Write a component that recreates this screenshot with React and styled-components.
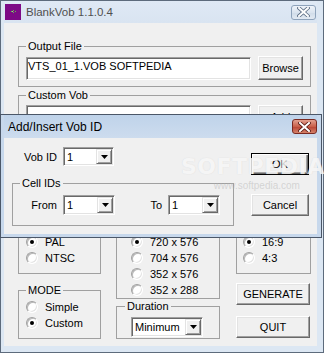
import React from "react";
import styled, { createGlobalStyle, css } from "styled-components";

const GlobalStyle = createGlobalStyle`
  html, body { margin: 0; padding: 0; background: #fff; }
  body { font-family: "Liberation Sans", Arial, sans-serif; font-size: 11px; color: #000; }
  * { box-sizing: border-box; }
`;

const Screen = styled.div`
  position: relative;
  width: 324px;
  height: 353px;
  overflow: hidden;
`;

const Window = styled.div`
  display: flex;
  flex-direction: column;
  width: 324px;
  height: 353px;
  border: 1px solid #5d6b7c;
  background: #dce7f3;
  padding: 0 6px 6px 3px;
`;

const TitleBar = styled.div`
  display: flex;
  align-items: center;
  height: ${(p) => p.$h}px;
  flex: none;
  padding-left: ${(p) => p.$pl}px;
  padding-right: ${(p) => p.$pr}px;
  background: ${(p) => p.$bg};
`;

const TitleText = styled.span`
  flex: 1;
  margin-left: ${(p) => p.$ml}px;
  font-family: "Liberation Sans", Arial, sans-serif;
  font-size: ${(p) => p.$size}px;
  color: ${(p) => p.$color};
  white-space: nowrap;
`;

const CloseButton = styled.div`
  width: 25px;
  height: 15px;
  border-radius: 3px;
  display: flex;
  align-items: center;
  justify-content: center;
  ${(p) =>
    p.$active
      ? css`
          border: 1px solid #7a2a22;
          background: linear-gradient(#e3a08f, #c9604a 50%, #b84232 51%, #d4826a);
        `
      : css`
          border: 1px solid #8ea3bb;
          background: linear-gradient(#eef3f9, #dae4ef 50%, #cfdbe8 51%, #e2eaf3);
        `}
`;

const Client = styled.div`
  flex: 1;
  background: #f0f0f0;
  display: flex;
  flex-direction: column;
  padding: 17px 6px 0 14px;
`;

const Group = styled.fieldset`
  margin: ${(p) => p.$mt || 0}px 0 0;
  padding: ${(p) => p.$pt || 0}px ${(p) => p.$pr || 0}px ${(p) => p.$pb || 0}px
    ${(p) => p.$pl || 0}px;
  border: 1px solid #a0a0a0;
  min-width: 0;
  width: ${(p) => (p.$w ? `${p.$w}px` : "auto")};
  display: flex;
  flex-direction: column;
`;

const Legend = styled.legend`
  padding: 0 2px;
  margin-left: ${(p) => p.$ml || 0}px;
  line-height: 12px;
  font-size: 11px;
`;

const Row = styled.div`
  display: flex;
  align-items: ${(p) => p.$align || "center"};
  gap: ${(p) => p.$gap || 0}px;
`;

const TextField = styled.div`
  width: ${(p) => p.$w}px;
  height: ${(p) => p.$h || 23}px;
  background: #fff;
  border: 1px solid;
  border-color: #a0a0a0 #fff #fff #a0a0a0;
  box-shadow: inset 1px 1px 0 #696969, inset -1px -1px 0 #e3e3e3;
  padding: 2px 1px 0 1px;
  line-height: 13px;
  white-space: nowrap;
`;

const Button = styled.button`
  width: ${(p) => p.$w}px;
  height: ${(p) => p.$h || 22}px;
  margin: ${(p) => p.$mt || 0}px 0 0 0;
  padding: 0;
  font-family: inherit;
  font-size: 11px;
  color: #000;
  background: #f0f0f0;
  display: flex;
  align-items: center;
  justify-content: center;
  border: 1px solid;
  border-color: #fff #696969 #696969 #fff;
  box-shadow: inset -1px -1px 0 #a0a0a0, inset 1px 1px 0 #e3e3e3;
  ${(p) =>
    p.$default &&
    css`
      border-color: #000;
      box-shadow: inset 1px 1px 0 #fff, inset -1px -1px 0 #696969, inset -2px -2px 0 #a0a0a0;
    `}
`;

const FieldLabel = styled.span`
  width: ${(p) => p.$w}px;
  margin-left: ${(p) => p.$ml || 0}px;
  margin-right: 6px;
  text-align: right;
  white-space: nowrap;
  flex: none;
`;

const Combo = styled.div`
  width: ${(p) => p.$w}px;
  height: ${(p) => p.$h || 20}px;
  flex: none;
  display: flex;
  background: #fff;
  border: 1px solid;
  border-color: #a0a0a0 #fff #fff #a0a0a0;
  box-shadow: inset 1px 1px 0 #696969, inset -1px -1px 0 #e3e3e3;
  padding: 1px;
`;

const ComboValue = styled.span`
  flex: 1;
  padding-left: 2px;
  line-height: 16px;
  font-size: 11px;
`;

const ComboArrow = styled.span`
  width: 16px;
  flex: none;
  display: flex;
  align-items: center;
  justify-content: center;
  background: #f0f0f0;
  border: 1px solid;
  border-color: #e3e3e3 #696969 #696969 #e3e3e3;
  box-shadow: inset 1px 1px 0 #fff, inset -1px -1px 0 #a0a0a0;
`;

const RadioList = styled.div`
  display: flex;
  flex-direction: column;
`;

const RadioRow = styled.div`
  display: flex;
  align-items: center;
  height: 16px;
  gap: 7px;
  white-space: nowrap;
`;

const RadioCircle = styled.span`
  width: 12px;
  height: 12px;
  flex: none;
  border-radius: 50%;
  background: #fff;
  border: 1px solid;
  border-color: #a0a0a0 #fff #fff #a0a0a0;
  box-shadow: inset 1px 1px 0 #b9b9b9, inset -1px -1px 0 #e3e3e3;
  display: flex;
  align-items: center;
  justify-content: center;
`;

const RadioDot = styled.span`
  width: 4px;
  height: 4px;
  border-radius: 50%;
  background: #000;
`;

const Columns = styled.div`
  display: flex;
  margin-top: 11px;
`;

const Column = styled.div`
  display: flex;
  flex-direction: column;
  width: ${(p) => p.$w}px;
  margin-left: ${(p) => p.$ml || 0}px;
  flex: none;
`;

const ListBox = styled(TextField)`
  margin-top: 5px;
`;

const Dialog = styled.div`
  position: absolute;
  left: 0;
  top: 114px;
  width: 322px;
  height: 124px;
  border: 1px solid #4b5768;
  background: #c7d8ec;
  display: flex;
  flex-direction: column;
  padding: 0 4px 3px 3px;
`;

const DialogBody = styled.div`
  flex: 1;
  background: #f0f0f0;
  display: flex;
  padding: 9px 0 0 8px;
`;

const DialogLeft = styled.div`
  display: flex;
  flex-direction: column;
  width: 222px;
`;

const DialogRight = styled.div`
  display: flex;
  flex-direction: column;
  margin-left: 17px;
  padding-top: 6px;
`;

const Watermark = styled.div`
  position: absolute;
  left: 181px;
  top: 154px;
  display: flex;
  flex-direction: column;
  align-items: center;
  pointer-events: none;
`;

const WatermarkBig = styled.span`
  font-family: "DejaVu Sans", sans-serif;
  font-weight: bold;
  font-size: 22px;
  letter-spacing: 0.5px;
  color: rgba(255, 255, 255, 0.75);
  text-shadow: 0 0 1px rgba(170, 170, 170, 0.35);
  line-height: 26px;
`;

const WatermarkSmall = styled.span`
  font-family: "Liberation Sans", Arial, sans-serif;
  font-size: 10px;
  color: rgba(175, 175, 175, 0.45);
  line-height: 12px;
  margin-left: 8px;
`;

const AppIcon = () => (
  <svg width="16" height="16" viewBox="0 0 16 16">
    <rect x="0" y="0" width="16" height="16" fill="#7d0a86" />
    <rect x="6" y="7" width="1" height="1" fill="#5ec24a" />
    <rect x="8" y="6" width="1" height="1" fill="#5ec24a" />
    <rect x="8" y="8" width="1" height="1" fill="#5ec24a" />
    <rect x="10" y="7" width="1" height="1" fill="#5ec24a" />
    <rect x="7" y="7" width="1" height="1" fill="#a0d890" />
  </svg>
);

const CloseGlyph = ({ active }) => (
  <svg width="13" height="10" viewBox="0 0 13 10">
    <path
      d="M2 1 L11 9 M11 1 L2 9"
      stroke={active ? "#5a1a12" : "#5d6f86"}
      strokeWidth="3.6"
      strokeLinecap="square"
      fill="none"
    />
    <path
      d="M2 1 L11 9 M11 1 L2 9"
      stroke="#fff"
      strokeWidth="2"
      strokeLinecap="square"
      fill="none"
    />
  </svg>
);

const Arrow = () => (
  <svg width="7" height="4" viewBox="0 0 7 4">
    <polygon points="0,0 7,0 3.5,4" fill="#000" />
  </svg>
);

const Radio = ({ checked, children }) => (
  <RadioRow>
    <RadioCircle>{checked && <RadioDot />}</RadioCircle>
    <span>{children}</span>
  </RadioRow>
);

const Select = ({ w, h, value }) => (
  <Combo $w={w} $h={h}>
    <ComboValue>{value}</ComboValue>
    <ComboArrow>
      <Arrow />
    </ComboArrow>
  </Combo>
);

export default function App() {
  return (
    <Screen>
      <GlobalStyle />
      <Window>
        <TitleBar $h={22} $pl={1} $pr={1} $bg="linear-gradient(#dfe9f5, #d9e4f1)">
          <AppIcon />
          <TitleText $ml={5} $size={11.5} $color="#4f4f4f">
            BlankVob 1.1.0.4
          </TitleText>
          <CloseButton>
            <CloseGlyph />
          </CloseButton>
        </TitleBar>
        <Client>
          <Group $w={293} $pt={4} $pr={6} $pb={6} $pl={7}>
            <Legend>Output File</Legend>
            <Row $gap={7}>
              <TextField $w={225}>VTS_01_1.VOB SOFTPEDIA</TextField>
              <Button $w={45} $h={24}>Browse</Button>
            </Row>
          </Group>
          <Group $w={293} $mt={2} $pt={4} $pr={6} $pb={6} $pl={7}>
            <Legend>Custom Vob</Legend>
            <Row $gap={7} $align="flex-start">
              <TextField $w={225} />
              <Button $w={45} $h={24}>Add</Button>
            </Row>
            <Row $gap={7} $align="flex-start">
              <ListBox $w={225} $h={60} />
              <Button $w={45} $h={24} $mt={5}>Remove</Button>
            </Row>
          </Group>
          <Columns>
            <Column $w={83}>
              <Group $pt={10} $pb={7} $pl={7}>
                <Legend>SYSTEM</Legend>
                <RadioList>
                  <Radio checked>PAL</Radio>
                  <Radio>NTSC</Radio>
                </RadioList>
              </Group>
              <Group $mt={10} $pt={3} $pb={7} $pl={7}>
                <Legend>MODE</Legend>
                <RadioList>
                  <Radio>Simple</Radio>
                  <Radio checked>Custom</Radio>
                </RadioList>
              </Group>
            </Column>
            <Column $w={104} $ml={15}>
              <Group $pt={10} $pb={0} $pl={14}>
                <Legend>RESOLUTION</Legend>
                <RadioList>
                  <Radio checked>720 x 576</Radio>
                  <Radio>704 x 576</Radio>
                  <Radio>352 x 576</Radio>
                  <Radio>352 x 288</Radio>
                </RadioList>
              </Group>
              <Group $mt={1} $pt={5} $pb={1} $pl={14}>
                <Legend $ml={-6}>Duration</Legend>
                <Select w={72} h={20} value="Minimum" />
              </Group>
            </Column>
            <Column $w={75} $ml={16}>
              <Group $pt={10} $pb={7} $pl={6}>
                <Legend>ASPECT</Legend>
                <RadioList>
                  <Radio checked>16:9</Radio>
                  <Radio>4:3</Radio>
                </RadioList>
              </Group>
              <Button $w={74} $h={22} $mt={9}>GENERATE</Button>
              <Button $w={74} $h={22} $mt={11}>QUIT</Button>
            </Column>
          </Columns>
        </Client>
      </Window>

      <Dialog>
        <TitleBar $h={23} $pl={4} $pr={0} $bg="linear-gradient(#bfd3ea, #cddcee)">
          <TitleText $ml={0} $size={12} $color="#000">
            Add/Insert Vob ID
          </TitleText>
          <CloseButton $active>
            <CloseGlyph active />
          </CloseButton>
        </TitleBar>
        <DialogBody>
          <DialogLeft>
            <Row>
              <FieldLabel $w={45}>Vob ID</FieldLabel>
              <Select w={51} h={19} value="1" />
            </Row>
            <Group $mt={11} $pt={6} $pr={12} $pb={10} $pl={7}>
              <Legend>Cell IDs</Legend>
              <Row>
                <FieldLabel $w={37}>From</FieldLabel>
                <Select w={52} h={20} value="1" />
                <FieldLabel $w={14} $ml={33}>To</FieldLabel>
                <Select w={52} h={20} value="1" />
              </Row>
            </Group>
          </DialogLeft>
          <DialogRight>
            <Button $w={58} $h={22} $default>OK</Button>
            <Button $w={58} $h={22} $mt={19}>Cancel</Button>
          </DialogRight>
        </DialogBody>
      </Dialog>

      <Watermark>
        <WatermarkBig>SOFTPEDIA</WatermarkBig>
        <WatermarkSmall>www.softpedia.com</WatermarkSmall>
      </Watermark>
    </Screen>
  );
}
